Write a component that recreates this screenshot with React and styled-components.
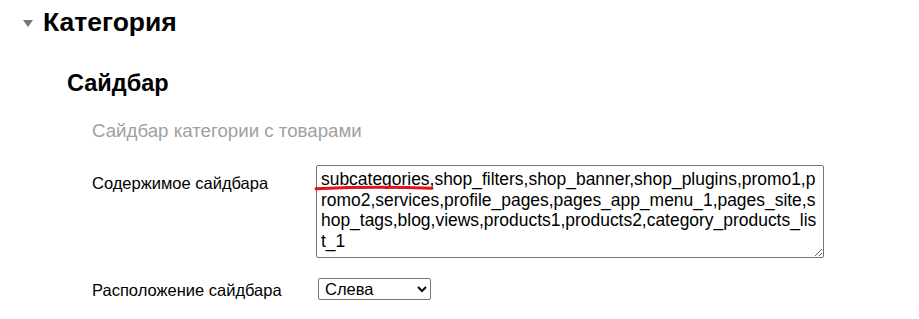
import React from "react";
import styled, { createGlobalStyle } from "styled-components";

const GlobalStyle = createGlobalStyle`
  body {
    margin: 0;
    background: #ffffff;
    font-family: "Liberation Sans", Arial, sans-serif;
    color: #000000;
  }
`;

const Page = styled.div`
  padding: 5px 0 0 23px;
`;

const TitleRow = styled.div`
  display: flex;
  align-items: center;
  gap: 10px;
`;

const Caret = styled.span`
  width: 0;
  height: 0;
  border-left: 5px solid transparent;
  border-right: 5px solid transparent;
  border-top: 7px solid #777777;
  margin-top: 2px;
`;

const Title = styled.h1`
  margin: 0;
  font-size: 26.5px;
  font-weight: bold;
  line-height: 34px;
`;

const Section = styled.div`
  padding: 0 0 0 44px;
`;

const Heading = styled.h2`
  margin: 29px 0 0;
  font-size: 23.5px;
  font-weight: bold;
  line-height: 30px;
`;

const Body = styled.div`
  padding-left: 25px;
`;

const Description = styled.p`
  margin: 22px 0 0;
  font-size: 18.7px;
  line-height: 22px;
  color: #a0a0a0;
`;

const Form = styled.div`
  display: grid;
  grid-template-columns: 224px auto;
  row-gap: 20px;
  margin-top: 23px;
  align-items: start;
`;

const Label = styled.label`
  font-size: 16.5px;
  line-height: 20px;
  padding-top: ${(p) => p.$top || 0}px;
`;

const FieldWrap = styled.div`
  position: relative;
  width: fit-content;
`;

const TextArea = styled.textarea`
  display: block;
  box-sizing: border-box;
  width: 508px;
  height: 93px;
  margin: 0;
  padding: 3px 5px 2px 4px;
  font-family: "Liberation Sans", Arial, sans-serif;
  font-size: 17.45px;
  line-height: 20.7px;
  color: #000000;
  border: 1px solid #767676;
  border-radius: 2px;
  resize: both;
`;

const Mark = styled.svg`
  position: absolute;
  left: -2px;
  top: 19px;
  pointer-events: none;
`;

const Select = styled.select`
  box-sizing: border-box;
  width: 113px;
  height: 22px;
  margin: 0 0 0 2px;
  padding: 0 2px;
  font-family: "Liberation Sans", Arial, sans-serif;
  font-size: 16.5px;
  color: #000000;
  background: #ffffff;
  border: 1px solid #767676;
  border-radius: 2px;
`;

const sidebarValue =
  "subcategories,shop_filters,shop_banner,shop_plugins,promo1,promo2,services,profile_pages,pages_app_menu_1,pages_site,shop_tags,blog,views,products1,products2,category_products_list_1";

export default function App() {
  return (
    <Page>
      <GlobalStyle />
      <TitleRow>
        <Caret />
        <Title>Категория</Title>
      </TitleRow>
      <Section>
        <Heading>Сайдбар</Heading>
        <Body>
          <Description>Сайдбар категории с товарами</Description>
          <Form>
            <Label $top={8}>Содержимое сайдбара</Label>
            <FieldWrap>
              <TextArea defaultValue={sidebarValue} spellCheck={false} />
              <Mark width="122" height="8" viewBox="0 0 122 8">
                <path
                  d="M2 4.8 Q 60 2.2 118 4.2"
                  stroke="#e8101a"
                  strokeWidth="3"
                  fill="none"
                  strokeLinecap="round"
                />
              </Mark>
            </FieldWrap>
            <Label $top={2}>Расположение сайдбара</Label>
            <div>
              <Select defaultValue="left">
                <option value="left">Слева</option>
                <option value="right">Справа</option>
              </Select>
            </div>
          </Form>
        </Body>
      </Section>
    </Page>
  );
}
